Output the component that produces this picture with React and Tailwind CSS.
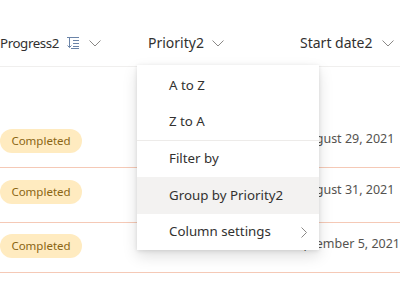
import React from "react";

const Chevron = ({ className = "" }) => (
  <svg className={className} width="12" height="7" viewBox="0 0 12 7" fill="none">
    <path d="M0.5 0.5 L6 6 L11.5 0.5" stroke="#8a8886" strokeWidth="1" />
  </svg>
);

const SortIcon = () => (
  <svg width="12" height="12" viewBox="0 0 12 12" fill="none" stroke="#6b84a8" strokeWidth="1">
    <path d="M0 0.5 H12" />
    <path d="M2.5 1 V10.5" />
    <path d="M0.5 8.5 L2.5 10.5 L4.5 8.5" />
    <path d="M6 3.5 H12" />
    <path d="M6 6.5 H12" />
    <path d="M6 9.5 H12" />
    <path d="M4 11.5 H12" />
  </svg>
);

const Badge = () => (
  <span className="inline-flex h-[24px] w-[82px] items-center justify-center rounded-full bg-[#ffebc0] text-[11.5px] text-[#8a6513]">
    Completed
  </span>
);

const rows = [
  { date: "August 29, 2021", h: "h-[101px]", pt: "pt-[60px]" },
  { date: "August 31, 2021", h: "h-[55px]", pt: "pt-[10px]" },
  { date: "September 5, 2021", h: "h-[50px]", pt: "pt-[9px]" },
];

export default function App() {
  return (
    <div
      className="relative h-[295px] w-[400px] overflow-hidden bg-white text-[#323130]"
      style={{ fontFamily: '"Segoe UI", "Noto Sans", "Open Sans", sans-serif' }}
    >
      {/* header */}
      <div className="flex h-[67px] items-end border-b border-[#f0efee] pb-[13px] text-[14px]">
        <div className="flex w-[148px] items-center">
          <span className="text-[13.3px] leading-[20px] tracking-[-0.4px]">Progress2</span>
          <span className="ml-[8px]"><SortIcon /></span>
          <span className="ml-[10px]"><Chevron /></span>
        </div>
        <div className="flex w-[152px] items-center">
          <span className="leading-[20px]">Priority2</span>
          <span className="ml-[8px]"><Chevron /></span>
        </div>
        <div className="flex items-center whitespace-nowrap">
          <span className="leading-[20px]">Start date2</span>
          <span className="ml-[9px]"><Chevron /></span>
        </div>
      </div>
      {/* rows */}
      {rows.map((r, i) => (
        <div key={i} className={`flex ${r.h} border-b border-[#f5c9b6]`}>
          <div className={`w-[300px] ${r.pt}`}>
            <Badge />
          </div>
          <div className={`${r.pt} whitespace-nowrap`}>
            <span className="block leading-[24px] text-[12.5px] text-[#55534f]">{r.date}</span>
          </div>
        </div>
      ))}
      {/* menu */}
      <div className="absolute left-[137px] top-[65px] w-[182px] bg-white pt-[3px] text-[13.3px] shadow-[0_6px_14px_rgba(0,0,0,0.13),0_1px_4px_rgba(0,0,0,0.11)]">
        <div className="flex h-[36px] items-center pl-[32px]">A to Z</div>
        <div className="flex h-[36px] items-center pl-[32px]">Z to A</div>
        <div className="h-px bg-[#edebe9]" />
        <div className="flex h-[36px] items-center pl-[32px]">Filter by</div>
        <div className="flex h-[37px] items-center bg-[#f3f2f1] pl-[32px]">Group by Priority2</div>
        <div className="flex h-[36px] items-center justify-between pl-[32px] pr-[12px]">
          <span>Column settings</span>
          <svg width="6" height="11" viewBox="0 0 6 11" fill="none">
            <path d="M0.5 0.5 L5.5 5.5 L0.5 10.5" stroke="#8a8886" strokeWidth="1" />
          </svg>
        </div>
      </div>
    </div>
  );
}
